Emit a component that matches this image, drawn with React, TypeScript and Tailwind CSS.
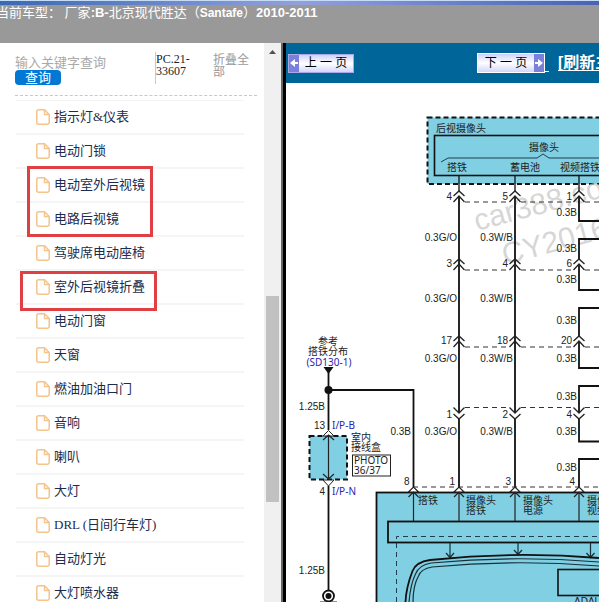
const menuItems = [
  "指示灯&仪表",
  "电动门锁",
  "电动室外后视镜",
  "电路后视镜",
  "驾驶席电动座椅",
  "室外后视镜折叠",
  "电动门窗",
  "天窗",
  "燃油加油口门",
  "音响",
  "喇叭",
  "大灯",
  "DRL (日间行车灯)",
  "自动灯光",
  "大灯喷水器",
];

const Header = () => (
  <header className="h-[43px] shrink-0 overflow-hidden bg-[#999999] text-white">
    <div className="h-px bg-[#c5dcf5]" />
    <div className="h-1 bg-gradient-to-r from-[#3a68b4] via-[#93a0dc] to-[#4a62b4]" />
    <h1 className="-ml-1 whitespace-nowrap font-['Liberation_Sans','Noto_Sans_CJK_SC',sans-serif] text-[13px] leading-4">
      当前车型： 厂家<b>:B-</b>北京现代胜达（
      <b className="text-xs">Santafe</b>）<b>2010-2011</b>
    </h1>
  </header>
);

const FileIcon = () => (
  <svg className="h-4 w-[14px] shrink-0" viewBox="0 0 14 16" fill="none" stroke="#f5c38c" strokeWidth="1.500">
    <path d="M2.500 0.800H8.500L13.200 5.500V13.500Q13.200 15.200 11.500 15.200H2.500Q0.800 15.200 0.800 13.500V2.500Q0.800 0.800 2.500 0.800Z" />
    <path d="M8.500 0.800V5.500H13.200" />
  </svg>
);

const Sidebar = () => (
  <aside className="w-[264px] shrink-0 overflow-hidden bg-white">
    <div className="ml-[15px] mr-[7px] flex h-[53px] items-start border-b border-dashed border-[#c8c8c8] pt-[9px]">
      <form className="w-[140px] pt-1" onSubmit={(e) => e.preventDefault()}>
        <input
          aria-label="输入关键字查询"
          placeholder="输入关键字查询"
          className="block h-[14px] w-32 text-[13px] leading-[14px] outline-none placeholder:text-[#a9a9a9]"
        />
        <button className="block h-[15px] w-[46px] rounded bg-[#0078d4] text-[13px] leading-[15px] text-white">
          查询
        </button>
      </form>
      <p className="h-8 w-[58px] border-l border-[#c8c8c8] pt-px font-['Liberation_Serif',serif] text-xs leading-3 text-[#222222]">
        PC.21-
        <br />
        33607
      </p>
      <a href="#" className="w-10 pt-0.5 text-xs leading-3 text-[#999999]">
        折叠全部
      </a>
    </div>
    <nav className="relative ml-4 mr-5 mt-1">
      <ul className="border-t border-[#f4f4f4]">
        {menuItems.map((item) => (
          <li key={item} className="h-[34px] border-b-2 border-[#f5f5f5]">
            <a
              href="#"
              className="flex h-8 items-center gap-1 pl-5 font-['Liberation_Serif','Noto_Sans_CJK_SC',serif] text-[13px] text-[#1c2c4c]"
            >
              <FileIcon />
              {item}
            </a>
          </li>
        ))}
      </ul>
      {/* Highlighted entries */}
      <div className="pointer-events-none absolute left-[11px] top-[66px] h-[71px] w-[126px] border-3 border-[#e04044]" />
      <div className="pointer-events-none absolute left-1 top-[171px] h-10 w-[137px] border-3 border-[#e04044]" />
    </nav>
  </aside>
);

const Scrollbar = () => (
  <div className="w-[17px] shrink-0 bg-[#f0f0f0] px-0.5">
    <svg className="block h-[17px] w-[13px]" viewBox="0 0 13 17">
      <path d="M3 11L6.500 7L10 11Z" fill="#505050" />
    </svg>
    <div className="mt-[236px] h-[206px] bg-[#c1c1c1]" />
  </div>
);

const Arrow = ({ next }: { next?: boolean }) => (
  <span className="flex h-full w-[10px] shrink-0 items-center bg-[#7b80dc]">
    <svg className="h-2 w-[10px]" viewBox="0 0 10 8" fill="white">
      {next ? (
        <path d="M1 3H4V0L9 4L4 8V5H1Z" />
      ) : (
        <path d="M9 3H6V0L1 4L6 8V5H9Z" />
      )}
    </svg>
  </span>
);

const Toolbar = () => (
  <div className="flex h-10 shrink-0 items-center overflow-hidden bg-[#006699] pl-0.5">
    <button className="flex h-[19px] w-[66px] shrink-0 items-center border border-[#a9a9e8] bg-gradient-to-b from-[#cfd2fa] via-white to-[#d3d6fb] text-xs text-black">
      <Arrow />
      <span className="grow whitespace-nowrap">上 一 页</span>
    </button>
    <button className="ml-[123px] flex h-5 w-[68px] shrink-0 items-center border border-white bg-gradient-to-b from-[#cfd2fa] via-white to-[#d3d6fb] text-xs text-black">
      <span className="grow whitespace-nowrap">下 一 页</span>
      <Arrow next />
    </button>
    <span className="mr-[9px] h-[17px] w-1 shrink-0 border-b border-white" />
    <a
      href="#"
      className="whitespace-nowrap text-base font-bold text-white underline underline-offset-2 [text-decoration-skip-ink:none]"
    >
      [刷新主页]
    </a>
  </div>
);

const wireX = [459, 515, 579];

const joints = [
  { y: 191, pinY: 200, pins: ["4", "5", "1"] },
  { y: 259, pinY: 267, pins: ["3", "4", "6"] },
  { y: 336, pinY: 344, pins: ["17", "18", "20"] },
];

const groundLabels = [216, 252, 283, 324, 362, 400, 435, 471];

const Diagram = () => (
  <svg
    className="block h-[519px] w-[313px] shrink-0 font-['Liberation_Sans','Noto_Sans_CJK_SC',sans-serif]"
    viewBox="286 83 313 519"
    fontSize="10"
    fill="#222"
    role="img"
    aria-label="后视摄像头"
  >
    {/* Camera */}
    <rect x="427.500" y="117.500" width="190" height="66.500" fill="#80cfe2" stroke="#111" strokeWidth="2" strokeDasharray="5 3" />
    <rect x="434.500" y="135.500" width="190" height="40" fill="none" stroke="#111" strokeWidth="1.600" />
    <path d="M441 162L448 158H537L543 154L549 158H599" fill="none" stroke="#1f3f50" />
    <text x="436" y="132">后视摄像头</text>
    <text x="529" y="151">摄像头</text>
    <text x="447" y="171">搭铁</text>
    <text x="510" y="171">蓄电池</text>
    <text x="560" y="171">视频搭铁</text>

    {/* Watermark */}
    <g fill="#c9c9c9" fillOpacity="0.75" fontSize="30">
      <text transform="translate(477 231) rotate(-15)">car388.com</text>
      <text transform="translate(505 265) rotate(-15)">CY2016</text>
    </g>

    {/* Main wires */}
    <g fill="none" stroke="#111" strokeWidth="1.800">
      <path d="M459 197V413M459 419V487M515 197V413M515 419V487" />
      <path d="M579 197V221H599M599 239H579V259M579 265V290H599M599 308H579V336M579 342V368H599M599 386H579V413M579 419V441.500H599M599 459H579V487" />
      <path d="M328.500 372V430M328.500 486V590M328.500 390H413.500V487" />
    </g>
    <path d="M459 176V191M515 176V191M579 176V191" stroke="#111" strokeWidth="1.300" />

    {/* Connectors */}
    {joints.map((joint) => (
      <g key={joint.y}>
        <path d={`M465 ${joint.y + 11}H509M521 ${joint.y + 11}H573M585 ${joint.y + 11}H599`} stroke="#333" strokeDasharray="5 4" />
        {wireX.map((x, i) => (
          <g key={x}>
            <path
              d={`M${x - 5.5} ${joint.y + 5}L${x} ${joint.y}L${x + 5.5} ${joint.y + 5}M${x - 5.5} ${joint.y + 11}L${x} ${joint.y + 5}L${x + 5.5} ${joint.y + 11}`}
              fill="none"
              stroke="#222"
              strokeWidth="1.300"
            />
            <text x={x - 7} y={joint.pinY} textAnchor="end">{joint.pins[i]}</text>
          </g>
        ))}
      </g>
    ))}
    <path d="M465 407.500H509M521 407.500H573M585 407.500H599" stroke="#333" strokeDasharray="5 4" />
    {wireX.map((x, i) => (
      <g key={x}>
        <path
          d={`M${x - 5.5} 407.500L${x} 413L${x + 5.5} 407.500M${x - 5.5} 414L${x} 419L${x + 5.5} 414`}
          fill="none"
          stroke="#222"
          strokeWidth="1.300"
        />
        <text x={x - 7} y="418" textAnchor="end">{["1", "2", "4"][i]}</text>
      </g>
    ))}
    {[241, 302, 362, 435].map((y) => (
      <g key={y} textAnchor="end">
        <text x="457" y={y}>0.3G/O</text>
        <text x="513" y={y}>0.3W/B</text>
      </g>
    ))}
    {groundLabels.map((y) => (
      <text key={y} x="577" y={y} textAnchor="end">0.3B</text>
    ))}
    <text x="411" y="435" textAnchor="end">0.3B</text>

    {/* Mirror module */}
    <path d="M413 487H599" stroke="#333" strokeDasharray="5 4" />
    <rect x="376.500" y="492.500" width="240" height="130" fill="#80cfe2" stroke="#111" strokeWidth="1.800" />
    <rect x="388" y="521.500" width="230" height="21" fill="none" stroke="#111" strokeWidth="1.800" />
    <path d="M396.500 602V536.500H599" fill="none" stroke="#1f3f50" strokeDasharray="5 4" />
    {[413.5, 459, 515, 579].map((x, i) => (
      <g key={x}>
        <path d={`M${x - 5} 492L${x} 487L${x + 5} 492Z`} fill="#fff" stroke="#222" strokeWidth="1.200" />
        <path d={`M${x - 5} 497L${x} 492L${x + 5} 497M${x} 492V521`} fill="none" stroke="#222" strokeWidth="1.200" />
        <text x={x - 4} y="485" textAnchor="end">{["8", "1", "3", "4"][i]}</text>
      </g>
    ))}
    <text x="418" y="504">搭铁</text>
    <text x="466" y="504">摄像头</text>
    <text x="466" y="514">搭铁</text>
    <text x="523" y="504">摄像头</text>
    <text x="523" y="514">电源</text>
    <text x="587" y="504">摄像头</text>
    <text x="587" y="514">视频</text>
    <g fill="none" stroke="#16303a" strokeWidth="1.200">
      <path d="M450 543V557M446 553L450 557.500L454 553M518 543V554M514 550L518 554.500L522 550M590.500 543V557M586.500 553L590.500 557.500L594.500 553" />
      <path d="M405.500 602C406 590 409 580 412.500 571Q416 562 430 560Q515 551 599 558" stroke="#111" strokeWidth="1.800" />
      <path d="M409 602C410 590 412 581 415.500 574Q419 565 431 563Q515 555 599 562" />
      <path d="M413 602C413 590 415 582 418.500 576Q421 569 432 567Q515 559 599 566" />
      <rect x="558" y="569.500" width="60" height="26" stroke="#111" strokeWidth="1.600" />
    </g>
    <text x="574" y="605">ADAL</text>

    {/* Ground distribution */}
    <g textAnchor="middle">
      <text x="328" y="345">参考</text>
      <text x="328" y="355">搭铁分布</text>
      <text x="329" y="366" fill="#2b22b0" className="font-['Noto_Sans',sans-serif]">(SD130-1)</text>
    </g>
    <path d="M323.500 367H333.500L328.500 374Z" fill="#111" />
    <circle cx="328.500" cy="390" r="4" fill="#111" />
    <text x="325" y="410" textAnchor="end">1.25B</text>
    <text x="325" y="429" textAnchor="end">13</text>
    <text x="332" y="429" fill="#2b22b0" className="font-['Noto_Sans',sans-serif]">I/P-B</text>
    <rect x="309.500" y="436" width="37.500" height="43.500" fill="#80cfe2" stroke="#111" strokeWidth="2" strokeDasharray="5 3" />
    <path d="M323 436L328.500 430.500L334 436ZM323 480L328.500 486L334 480Z" fill="#fff" stroke="#222" />
    <path d="M328.500 435V479M323 440L328.500 435L334 440M323 474L328.500 479L334 474" fill="none" stroke="#222" strokeWidth="1.200" />
    <text x="351" y="441">室内</text>
    <text x="351" y="451">接线盒</text>
    <rect x="352.500" y="455" width="38" height="21" fill="none" stroke="#222" />
    <g className="font-['Noto_Sans',sans-serif]">
      <text x="354" y="464">PHOTO</text>
      <text x="354" y="474">36/37</text>
    </g>
    <text x="325" y="495" textAnchor="end">4</text>
    <text x="332" y="495" fill="#2b22b0" className="font-['Noto_Sans',sans-serif]">I/P-N</text>
    <text x="325" y="574" textAnchor="end">1.25B</text>
    <circle cx="328.500" cy="596" r="5.500" fill="#fff" stroke="#111" strokeWidth="1.800" />
    <circle cx="328.500" cy="596" r="3" fill="#111" />
    <path d="M320 602H337" stroke="#222" />
  </svg>
);

export default function App() {
  return (
    <div className="flex h-screen flex-col overflow-hidden bg-white font-['Liberation_Sans','Noto_Sans_CJK_SC',sans-serif]">
      <Header />
      <div className="flex min-h-0 grow">
        <Sidebar />
        <Scrollbar />
        <div className="w-[5px] shrink-0 border-l-2 border-[#666666] bg-black" />
        <main className="flex min-w-0 grow flex-col overflow-hidden bg-white">
          <Toolbar />
          <Diagram />
        </main>
      </div>
    </div>
  );
}
